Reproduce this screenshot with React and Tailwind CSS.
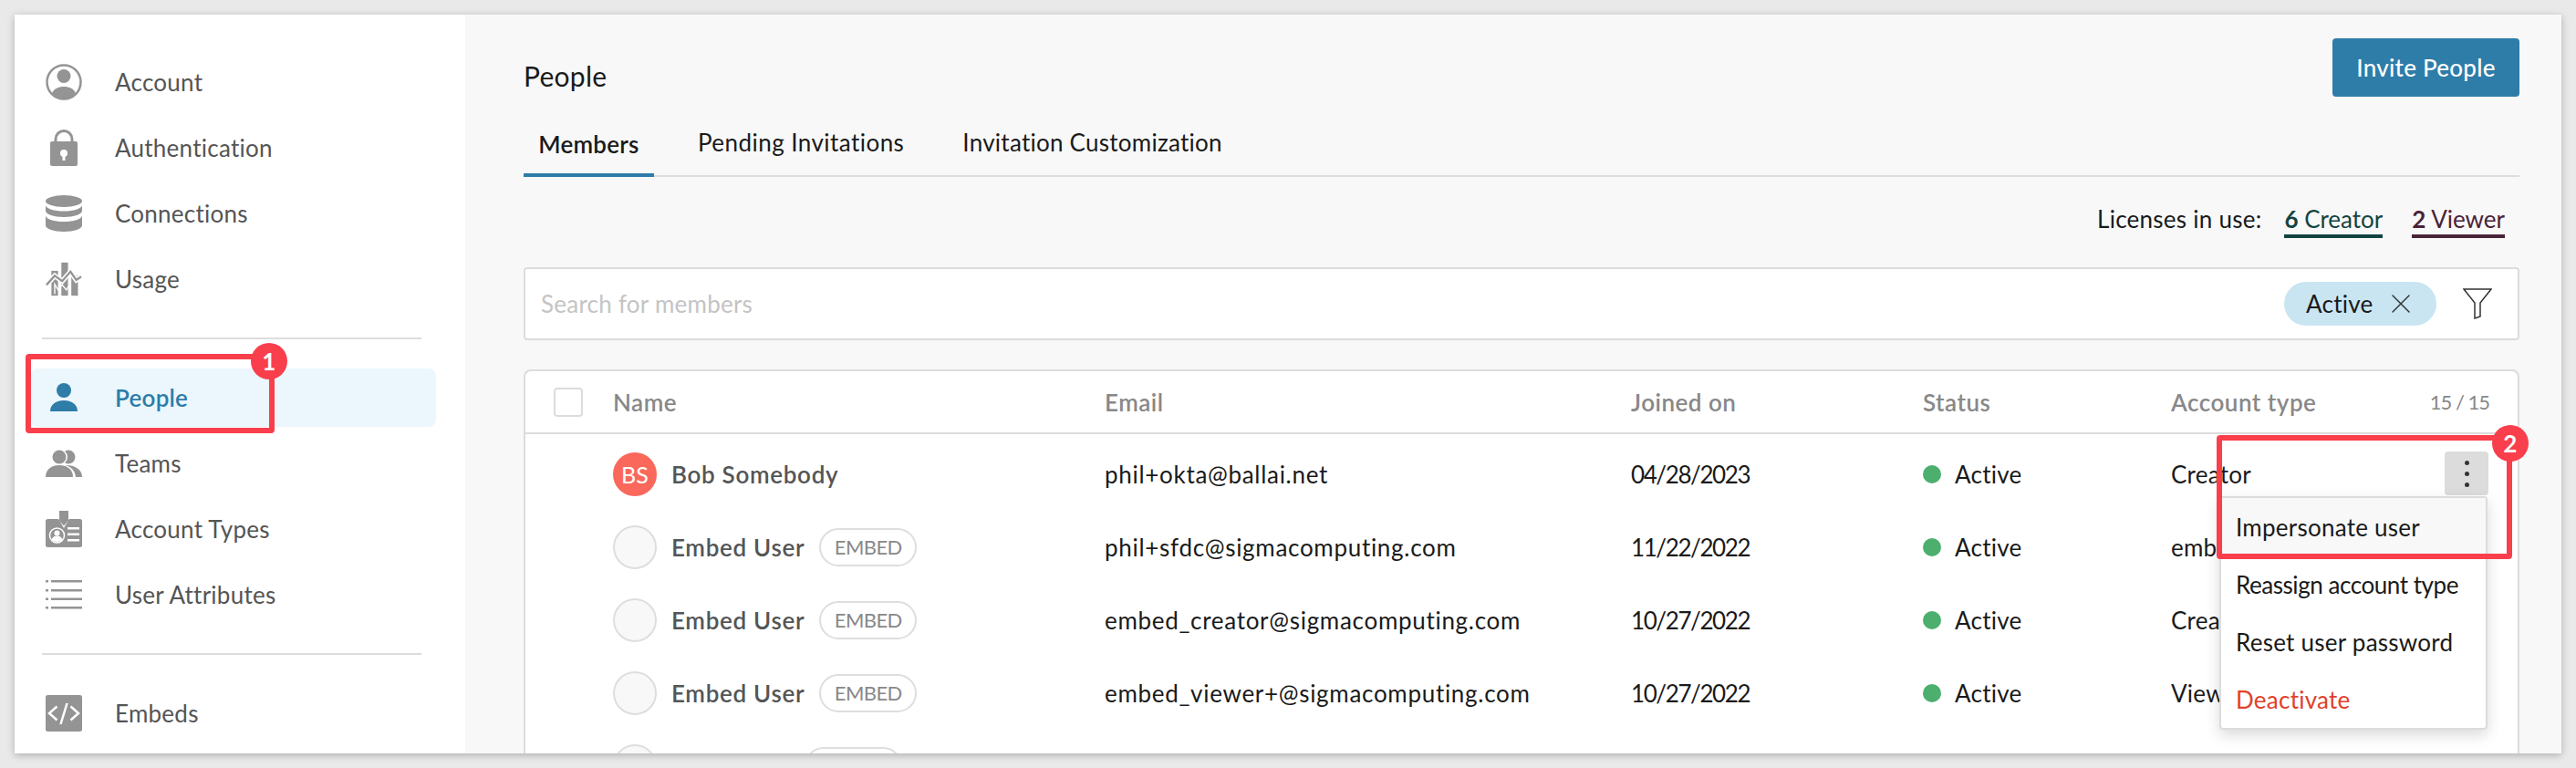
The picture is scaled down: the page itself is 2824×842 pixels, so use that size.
import React from 'react';
import { X } from 'lucide-react';

const GRAY = '#949494';

const AccountIcon = () => (
  <svg width="40" height="40" viewBox="0 0 40 40">
    <circle cx="20" cy="20" r="18.5" fill="none" stroke={GRAY} strokeWidth="2.5" />
    <circle cx="20" cy="13.5" r="7.5" fill={GRAY} />
    <path d="M7 32.5C9 27 14 25 20 25s11 2 13 7.5C29.500 36.500 25 38.500 20 38.500S10.500 36.500 7 32.500Z" fill={GRAY} />
  </svg>
);

const LockIcon = () => (
  <svg width="40" height="40" viewBox="0 0 40 40">
    <path d="M11 15V10.500a9 9 0 0 1 18 0V15" fill="none" stroke={GRAY} strokeWidth="3" />
    <rect x="5" y="13" width="30" height="27" rx="2" fill={GRAY} />
    <circle cx="20" cy="26" r="4" fill="#fff" />
    <rect x="18.500" y="27" width="3" height="7" fill="#fff" />
  </svg>
);

const DatabaseIcon = () => (
  <svg width="40" height="40" viewBox="0 0 40 40">
    <ellipse cx="20" cy="6.500" rx="20" ry="6.500" fill={GRAY} />
    <path d="M0 11c1 4 9 6.500 20 6.500S39 15 40 11v6c0 4-9 7-20 7S0 21 0 17Z" fill={GRAY} />
    <path d="M0 22.500c1 4 9 6.500 20 6.500s19-2.500 20-6.500v10.500c0 4-9 7-20 7S0 37 0 33Z" fill={GRAY} />
  </svg>
);

const UsageIcon = () => (
  <svg width="44" height="40" viewBox="-2 0 44 40">
    <rect x="5" y="10" width="8" height="30" fill={GRAY} />
    <rect x="17" y="0" width="8" height="40" fill={GRAY} />
    <rect x="29" y="16" width="8" height="24" fill={GRAY} />
    <path d="M-1 27 9 16l9 6.500L28 11l7 10 6-4" fill="none" stroke="#fff" strokeWidth="6" />
    <path d="M-1 27 9 16l9 6.500L28 11l7 10 6-4" fill="none" stroke={GRAY} strokeWidth="2.500" />
    <path d="M9 38V26l4 7 5-6 5 6 5-8" fill="none" stroke="#fff" strokeWidth="1.500" />
  </svg>
);

const PersonIcon = () => (
  <svg width="40" height="40" viewBox="0 0 40 40">
    <circle cx="20" cy="12" r="8" fill="#2e7ca8" />
    <path d="M5 35c0-8 7-12 15-12s15 4 15 12Z" fill="#2e7ca8" />
  </svg>
);

const TeamsIcon = () => (
  <svg width="40" height="40" viewBox="0 0 40 40">
    <circle cx="25" cy="13" r="7.500" fill={GRAY} />
    <path d="M8 35c0-9 7-13 15-13s17 4 17 13Z" fill={GRAY} />
    <circle cx="15" cy="13" r="9" fill="#fff" />
    <circle cx="15" cy="13" r="7.500" fill={GRAY} />
    <path d="M-2 36c0-10 8-15 17-15s18 5 18 15Z" fill="#fff" />
    <path d="M0 35c0-9 7-13 15-13s15 4 15 13Z" fill={GRAY} />
  </svg>
);

const BadgeIcon = () => (
  <svg width="40" height="40" viewBox="0 0 40 40">
    <rect x="0" y="9" width="40" height="31" rx="2.500" fill={GRAY} />
    <path d="M13.500 8V-1h13V8l-6.500 11Z" fill="#fff" />
    <path d="M15 0h10v11l-5 5.500-5-5.500Z" fill={GRAY} />
    <circle cx="12.500" cy="27" r="8" fill={GRAY} stroke="#fff" strokeWidth="1.500" />
    <circle cx="12.500" cy="24.500" r="3" fill="#fff" />
    <path d="M6.500 32c1-3.500 3.500-4.500 6-4.500s5 1 6 4.500c-3.500 2.500-8.500 2.500-12 0Z" fill="#fff" />
    <rect x="24" y="18" width="13" height="2.500" fill="#fff" />
    <rect x="24" y="24.500" width="13" height="2.500" fill="#fff" />
    <rect x="24" y="31" width="13" height="2.500" fill="#fff" />
  </svg>
);

const ListIcon = () => (
  <svg width="40" height="40" viewBox="0 0 40 40">
    {[4, 14, 23.500, 33].map((y) => (
      <g key={y} fill={GRAY}>
        <rect x="0" y={y} width="3" height="2.500" />
        <rect x="6" y={y} width="34" height="2.500" />
      </g>
    ))}
  </svg>
);

const EmbedIcon = () => (
  <svg width="40" height="40" viewBox="0 0 40 40">
    <rect width="40" height="40" rx="2.500" fill={GRAY} />
    <path d="M12.500 12.500 4 20l8.500 7.500M27.500 12.500 36 20l-8.500 7.500M23.500 9 16.500 32" fill="none" stroke="#fff" strokeWidth="2.500" />
  </svg>
);

const NavItem = ({ icon, label, active }) => (
  <div className={`flex items-center gap-[36px] h-[64px] mb-[8px] ml-[18px] mr-[32px] px-[16px] rounded-lg ${active ? 'bg-[#ebf7fd] text-[#2e7ca8] font-semibold' : 'text-[#555555]'}`}>
    <span className="w-[40px] h-[40px] flex items-center justify-center shrink-0">{icon}</span>
    <span>{label}</span>
  </div>
);

const Avatar = ({ initials }) =>
  initials ? (
    <div className="w-[48px] h-[48px] rounded-full bg-[#f9685b] text-white flex items-center justify-center text-[25px]">{initials}</div>
  ) : (
    <div className="w-[48px] h-[48px] rounded-full bg-[#f8f8f8] border-2 border-[#dedede]" />
  );

const rows = [
  { name: 'Bob Somebody', initials: 'BS', email: 'phil+okta@ballai.net', joined: '04/28/2023', type: 'Creator' },
  { name: 'Embed User', embed: true, email: 'phil+sfdc@sigmacomputing.com', joined: '11/22/2022', type: 'embed_user' },
  { name: 'Embed User', embed: true, email: 'embed_creator@sigmacomputing.com', joined: '10/27/2022', type: 'Creator' },
  { name: 'Embed User', embed: true, email: 'embed_viewer+@sigmacomputing.com', joined: '10/27/2022', type: 'Viewer' },
];

const Kebab = ({ color = '#333333' }) => (
  <div className="flex flex-col gap-[7px] items-center">
    <span className="w-[5px] h-[5px] rounded-full" style={{ backgroundColor: color }} />
    <span className="w-[5px] h-[5px] rounded-full" style={{ backgroundColor: color }} />
    <span className="w-[5px] h-[5px] rounded-full" style={{ backgroundColor: color }} />
  </div>
);

const App = () => {
  return (
    <div className="w-[2824px] h-[842px] bg-[#e9e9e9] p-4 overflow-hidden font-['Lato',sans-serif] text-[26px] leading-[32px] tracking-[0.25px] text-[#1a1a1a]">
      <div className="relative flex w-full h-[810px] shadow-[0_2px_8px_rgba(0,0,0,0.25)]">
        {/* sidebar */}
        <div className="w-[494px] h-full bg-white pt-[42px] shrink-0 overflow-hidden">
          <NavItem icon={<AccountIcon />} label="Account" />
          <NavItem icon={<LockIcon />} label="Authentication" />
          <NavItem icon={<DatabaseIcon />} label="Connections" />
          <NavItem icon={<UsageIcon />} label="Usage" />
          <div className="h-[2px] w-[416px] ml-[30px] bg-[#dcdcdc] mt-[32px] mb-[32px]" />
          <NavItem icon={<PersonIcon />} label="People" active />
          <NavItem icon={<TeamsIcon />} label="Teams" />
          <NavItem icon={<BadgeIcon />} label="Account Types" />
          <NavItem icon={<ListIcon />} label="User Attributes" />
          <div className="h-[2px] w-[416px] ml-[30px] bg-[#dcdcdc] mt-[32px] mb-[32px]" />
          <NavItem icon={<EmbedIcon />} label="Embeds" />
        </div>

        {/* main */}
        <div className="flex-1 min-w-0 h-full bg-[#f8f8f8] pt-[26px] pl-[64px] pr-[46px] overflow-hidden">
          <div className="flex justify-between h-[64px]">
            <div className="pt-[25px] text-[30px]">People</div>
            <button className="w-[205px] h-[64px] bg-[#2e7ca8] text-white rounded font-medium">Invite People</button>
          </div>

          <div className="flex items-end h-[88px] border-b-2 border-[#dcdcdc]">
            <div className="w-[143px] h-[54px] pt-[2px] text-center font-semibold border-b-4 border-[#2e7ca8] -mb-[2px]">Members</div>
            <div className="ml-[48px] h-[54px] pt-[2px] tracking-[0.45px]">Pending Invitations</div>
            <div className="ml-[64px] h-[54px] pt-[2px]">Invitation Customization</div>
          </div>

          <div className="flex justify-end items-start h-[99px] pt-[30px] pr-[16px]">
            <span>Licenses in use:</span>
            <span className="ml-[25px] h-[37px] border-b-4 border-[#13443f] text-[#13443f] tracking-normal"><b className="font-bold">6</b> Creator</span>
            <span className="ml-[32px] h-[37px] border-b-4 border-[#4a2339] text-[#4a2339] tracking-normal"><b className="font-bold">2</b> Viewer</span>
          </div>

          <div className="flex items-center h-[80px] bg-white border-2 border-[#dcdcdc] rounded pl-[17px] pr-[29px]">
            <span className="flex-1 text-[#c4c4c4]">Search for members</span>
            <div className="flex items-center w-[167px] h-[48px] rounded-full bg-[#c9e5f2] pl-[24px]">
              <span>Active</span>
              <X size={36} strokeWidth={1} className="ml-[12px] text-[#333333]" />
            </div>
            <svg width="32" height="34" viewBox="0 0 32 34" className="ml-[28px] translate-x-[1px]">
              <path d="M1 1h30L19 16v15l-6 2V16Z" fill="none" stroke="#333333" strokeWidth="1.500" />
            </svg>
          </div>

          <div className="mt-[32px] bg-white border-2 border-b-0 border-[#dcdcdc] rounded-t-lg h-[500px]">
            <div className="grid grid-cols-[96px_539px_577px_320px_272px_1fr] items-center h-[69px] border-b-2 border-[#dcdcdc] text-[#888888] font-semibold tracking-[0.5px]">
              <div className="pl-[31px]">
                <div className="w-[32px] h-[32px] bg-white border-2 border-[#dcdcdc] rounded" />
              </div>
              <div>Name</div>
              <div>Email</div>
              <div>Joined on</div>
              <div>Status</div>
              <div className="flex items-center justify-between pr-[31px]">
                <span>Account type</span>
                <span className="text-[22px] font-normal tracking-[-1px]">15 / 15</span>
              </div>
            </div>
            <div className="pt-[4px]">
              {rows.map((row, i) => (
                <div key={i} className="grid grid-cols-[96px_539px_577px_320px_272px_1fr] items-center h-[80px]">
                  <div />
                  <div className="flex items-center">
                    <Avatar initials={row.initials} />
                    <span className="ml-[16px] font-semibold text-[#555555] tracking-[0.7px]">{row.name}</span>
                    {row.embed && (
                      <span className="ml-[16px] h-[42px] w-[107px] justify-center flex items-center rounded-full border-2 border-[#dedede] text-[22px] tracking-[-0.6px] text-[#888888]">EMBED</span>
                    )}
                  </div>
                  <div className="tracking-[0.7px]">{row.email}</div>
                  <div className="tracking-[-1.4px]">{row.joined}</div>
                  <div className="flex items-center">
                    <span className="w-[20px] h-[20px] rounded-full bg-[#4caf6e]" />
                    <span className="ml-[15px]">Active</span>
                  </div>
                  <div>{row.type}</div>
                </div>
              ))}
              {/* fifth row, cut off by the bottom of the card */}
              <div className="grid grid-cols-[96px_539px_577px_320px_272px_1fr] items-center h-[80px]">
                <div />
                <div className="flex items-center">
                  <Avatar />
                  <span className="ml-[162px] h-[42px] w-[107px] rounded-full border-2 border-[#dedede]" />
                </div>
                <div />
                <div />
                <div />
                <div className="flex justify-end pr-[33px]">
                  <span className="w-[48px] flex justify-center"><Kebab /></span>
                </div>
              </div>
            </div>
          </div>
        </div>

        {/* row 1 action + open menu */}
        <div className="absolute left-[2664px] top-[479px] w-[48px] h-[48px] rounded bg-[#dcdcdc] flex items-center justify-center">
          <Kebab />
        </div>
        <div className="absolute left-[2417px] top-[528px] w-[294px] h-[256px] bg-white border-2 border-[#dcdcdc] rounded shadow-[0_6px_16px_rgba(0,0,0,0.15)]">
          <div className="h-[63px] pl-[16px] flex items-center bg-[#f8f8f8]">Impersonate user</div>
          <div className="h-[63px] pl-[16px] flex items-center tracking-[-0.45px]">Reassign account type</div>
          <div className="h-[63px] pl-[16px] flex items-center">Reset user password</div>
          <div className="h-[63px] pl-[16px] flex items-center text-[#e0412b]">Deactivate</div>
        </div>

        {/* annotations */}
        <div className="absolute left-[12px] top-[372px] w-[273px] h-[87px] border-[6px] border-[#f93f4c] rounded" />
        <div className="absolute left-[259px] top-[360px] w-[40px] h-[40px] rounded-full bg-[#f93f4c] text-white font-bold flex items-center justify-center">1</div>
        <div className="absolute left-[2414px] top-[461px] w-[324px] h-[136px] border-[6px] border-[#f93f4c] rounded" />
        <div className="absolute left-[2716px] top-[450px] w-[40px] h-[40px] rounded-full bg-[#f93f4c] text-white font-bold flex items-center justify-center">2</div>
      </div>
    </div>
  );
};

export default App;
